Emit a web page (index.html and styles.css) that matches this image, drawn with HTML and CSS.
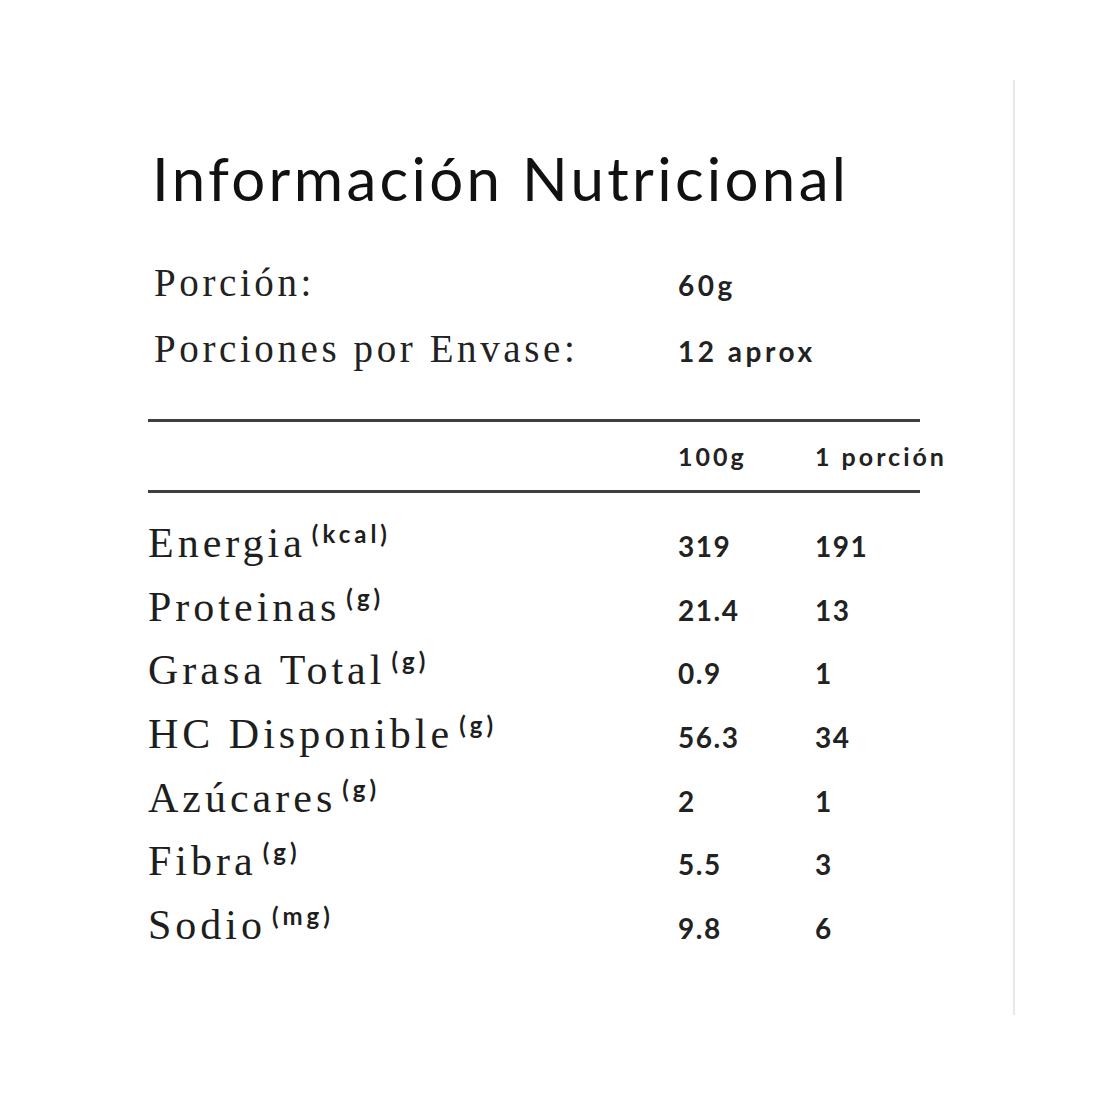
FILE: index.html
```html
<!DOCTYPE html>
<html lang="es">
<head>
<meta charset="utf-8">
<title>Información Nutricional</title>
<link rel="stylesheet" href="styles.css">
</head>
<body>
<div class="page">
  <div class="label">
    <h1 class="title">Información Nutricional</h1>
    <div class="serving">
      <div class="serving-row"><span class="s-label">Porción:</span><span class="s-val">60g</span></div>
      <div class="serving-row"><span class="s-label">Porciones por Envase:</span><span class="s-val">12 aprox</span></div>
    </div>
    <div class="head-row">
      <span></span><span class="h-val">100g</span><span class="h-val">1 porción</span>
    </div>
    <div class="rows">
      <div class="row"><span class="n-label">Energia<sup>(kcal)</sup></span><span class="num">319</span><span class="num">191</span></div>
      <div class="row"><span class="n-label">Proteinas<sup>(g)</sup></span><span class="num">21.4</span><span class="num">13</span></div>
      <div class="row"><span class="n-label">Grasa Total<sup>(g)</sup></span><span class="num">0.9</span><span class="num">1</span></div>
      <div class="row"><span class="n-label">HC Disponible<sup>(g)</sup></span><span class="num">56.3</span><span class="num">34</span></div>
      <div class="row"><span class="n-label">Azúcares<sup>(g)</sup></span><span class="num">2</span><span class="num">1</span></div>
      <div class="row"><span class="n-label">Fibra<sup>(g)</sup></span><span class="num">5.5</span><span class="num">3</span></div>
      <div class="row"><span class="n-label">Sodio<sup>(mg)</sup></span><span class="num">9.8</span><span class="num">6</span></div>
    </div>
  </div>
</div>
</body>
</html>
```
FILE: styles.css
```css
html, body {
  margin: 0;
  padding: 0;
  background: #ffffff;
}
body {
  color: #1a1a1a;
}
.page {
  width: 1013px;
  height: 935px;
  margin-top: 80px;
  border-right: 2px solid #e8e8e8;
}
.label {
  padding-left: 148px;
  padding-top: 58px;
  width: 772px;
}
.title {
  margin: 0 0 0 4px;
  font-family: "Lato", sans-serif;
  font-weight: 400;
  font-size: 60px;
  line-height: 80px;
  letter-spacing: 3.3px;
  color: #111;
  white-space: nowrap;
}
.serving {
  margin-top: 42px;
  padding-left: 6px;
}
.serving-row {
  display: grid;
  grid-template-columns: 524px auto;
  align-items: baseline;
  height: 66px;
}
.s-label {
  font-family: "Liberation Serif", serif;
  font-size: 39px;
  letter-spacing: 3.6px;
  color: #222;
}
.s-val {
  font-family: "Lato", sans-serif;
  font-size: 28px;
  font-weight: 700;
  letter-spacing: 3.5px;
  color: #222;
}
.head-row {
  margin-top: 27px;
  border-top: 3px solid #3e3e3e;
  border-bottom: 3px solid #3e3e3e;
  display: grid;
  grid-template-columns: 530px 137px auto;
  height: 68px;
  align-items: center;
  white-space: nowrap;
}
.h-val {
  font-family: "Lato", sans-serif;
  font-size: 25px;
  font-weight: 700;
  color: #222;
  letter-spacing: 3px;
}
.rows {
  padding-top: 26px;
}
.row {
  display: grid;
  grid-template-columns: 530px 137px auto;
  align-items: baseline;
  height: 63.7px;
}
.n-label {
  font-family: "Liberation Serif", serif;
  font-size: 42px;
  letter-spacing: 4px;
  color: #1e1e1e;
  white-space: nowrap;
}
.n-label sup {
  font-family: "Lato", sans-serif;
  font-weight: 700;
  font-size: 24px;
  letter-spacing: 4px;
  margin-left: 6px;
  vertical-align: 14px;
}
.num {
  font-family: "Lato", sans-serif;
  font-size: 28px;
  font-weight: 700;
  color: #222;
  letter-spacing: 1.5px;
}
```
